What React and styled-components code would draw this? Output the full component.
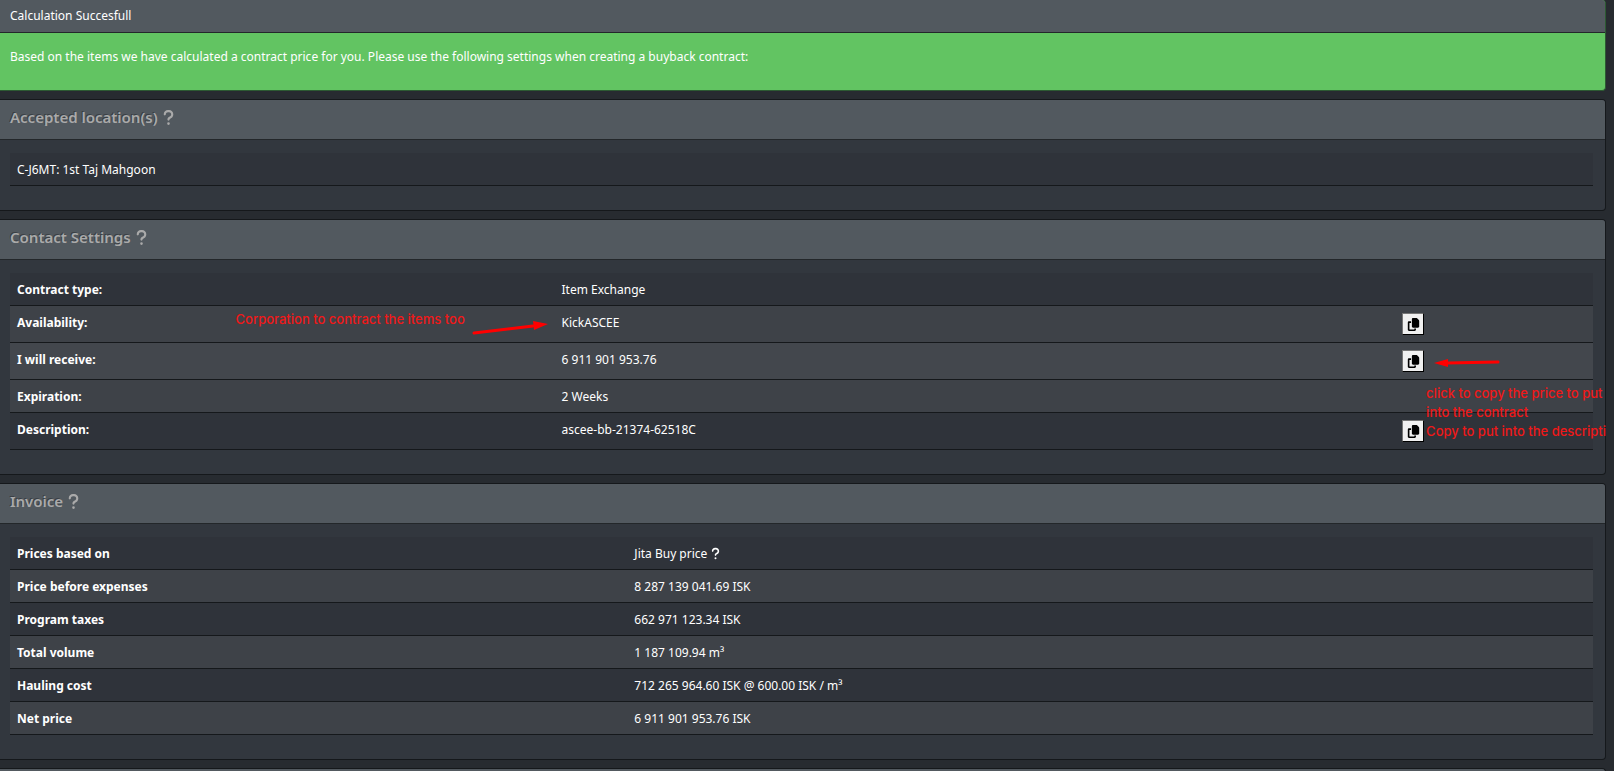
import React from 'react';
import styled, { createGlobalStyle, css } from 'styled-components';
import { FaCopy, FaQuestion } from 'react-icons/fa6';

const GlobalStyle = createGlobalStyle`
  *, *::before, *::after {
    box-sizing: border-box;
  }
  body {
    margin: 0;
    background: #272b30;
    color: #fff;
    font-family: 'Noto Sans', 'Open Sans', sans-serif;
    font-size: 12px;
    line-height: 20px;
  }
`;

const Page = styled.main`
  display: flex;
  flex-direction: column;
  gap: 8px;
  height: 100vh;
  padding-right: 8px;
  overflow: hidden;
`;

const Card = styled.section`
  flex-shrink: 0;
  background: ${(props) => (props.$success ? '#62c462' : '#32373e')};
  border: 1px solid ${(props) => (props.$success ? '#2c5a32' : '#15181b')};
  border-left: 0;
  border-radius: 0 4px 4px 0;
  ${(props) =>
    props.$success &&
    css`
      border-top: 0;
    `}
`;

const CardHeader = styled.header`
  display: flex;
  align-items: center;
  height: ${(props) => (props.$small ? 33 : 40)}px;
  padding: 0 10px 5px;
  background: #52595f;
  border-bottom: 1px solid #23272a;
  border-radius: 0 3px 0 0;
  ${(props) =>
    props.$small &&
    css`
      padding-bottom: 0;
    `}
`;

const Title = styled.h4`
  display: flex;
  align-items: center;
  gap: 2px;
  margin: 0;
  color: #aaa;
  font-size: 15px;
  font-weight: 600;
  text-shadow: -1px -1px 0 rgba(0, 0, 0, 0.3);
  svg {
    font-size: 17px;
  }
`;

const Message = styled.p`
  margin: 0;
  padding: 14px 10px 23px;
`;

const CardBody = styled.div`
  padding: 13px 12px 24px 10px;
`;

const Table = styled.table`
  width: 100%;
  table-layout: fixed;
  border-collapse: separate;
  border-spacing: 0;
`;

const Row = styled.tr`
  height: ${(props) => (props.$tall ? 37 : 33)}px;
  background: #3e4248;
  &:nth-child(odd) {
    background: ${(props) => (props.$active ? '#43474d' : '#2f333a')};
  }
  th,
  td {
    padding: 7px 7px 5px;
    border-bottom: 1px solid #15181b;
    text-align: left;
    vertical-align: top;
  }
`;

const Col = styled.col`
  width: ${(props) => props.$width};
`;

const Anchor = styled.div`
  position: relative;
  height: 22px;
`;

const CopyButton = styled.button`
  display: flex;
  align-items: center;
  justify-content: center;
  width: 22px;
  height: 22px;
  padding: 0;
  border: 1px solid;
  border-color: #767676 #000 #000 #767676;
  background: #f0f0f0;
  color: #000;
  font-size: 13px;
`;

const Note = styled.div`
  position: absolute;
  top: ${(props) => props.$top}px;
  left: ${(props) => props.$left}px;
  color: #f01818;
  font-family: 'Inter', sans-serif;
  font-size: 13px;
  font-weight: 500;
  line-height: 19px;
  white-space: nowrap;
`;

const Arrow = styled.svg`
  position: absolute;
  top: ${(props) => props.$top}px;
  left: ${(props) => props.$left}px;
  fill: #f00;
  stroke: #f00;
`;

const Hint = styled(FaQuestion)`
  margin-left: 2px;
  font-size: 13px;
  vertical-align: -2px;
`;

const settings = [
  { label: 'Contract type:', value: 'Item Exchange' },
  { label: 'Availability:', value: 'KickASCEE', copy: true },
  { label: 'I will receive:', value: '6 911 901 953.76', copy: true },
  { label: 'Expiration:', value: '2 Weeks' },
  { label: 'Description:', value: 'ascee-bb-21374-62518C', copy: true },
];

const invoice = [
  { label: 'Prices based on', value: 'Jita Buy price', hint: true },
  { label: 'Price before expenses', value: '8 287 139 041.69 ISK' },
  { label: 'Program taxes', value: '662 971 123.34 ISK' },
  { label: 'Total volume', value: '1 187 109.94 m³' },
  { label: 'Hauling cost', value: '712 265 964.60 ISK @ 600.00 ISK / m³' },
  { label: 'Net price', value: '6 911 901 953.76 ISK' },
];

function HelpTitle({ children }) {
  return (
    <CardHeader>
      <Title>
        {children} <FaQuestion />
      </Title>
    </CardHeader>
  );
}

function CorporationNote() {
  return (
    <Anchor as='span'>
      <Note as='span' $top={-4} $left={-326}>
        Corporation to contract the items too
      </Note>
      <Arrow width='80' height='18' $top={5} $left={-91}>
        <path d='M3 14 L62 7' strokeWidth='3' strokeLinecap='round' />
        <path d='M62 2 L77 5 L63 11 Z' strokeWidth='0' />
      </Arrow>
    </Anchor>
  );
}

function PriceNote() {
  return (
    <>
      <Arrow width='70' height='12' $top={7} $left={31}>
        <path d='M14 6 L65 5' strokeWidth='3' strokeLinecap='round' />
        <path d='M1 6 L15 2 L15 10 Z' strokeWidth='0' />
      </Arrow>
      <Note $top={34} $left={24}>
        click to copy the price to put
        <br />
        into the contract
        <br />
        Copy to put into the descripti
      </Note>
    </>
  );
}

export default function App() {
  return (
    <>
      <GlobalStyle />
      <Page>
        <Card $success>
          <CardHeader $small>Calculation Succesfull</CardHeader>
          <Message>
            Based on the items we have calculated a contract price for you.
            Please use the following settings when creating a buyback contract:
          </Message>
        </Card>

        <Card>
          <HelpTitle>Accepted location(s)</HelpTitle>
          <CardBody>
            <Table>
              <tbody>
                <Row>
                  <td>C-J6MT: 1st Taj Mahgoon</td>
                </Row>
              </tbody>
            </Table>
          </CardBody>
        </Card>

        <Card>
          <HelpTitle>Contact Settings</HelpTitle>
          <CardBody>
            <Table>
              <colgroup>
                <Col $width='34.4%' />
                <Col $width='53.1%' />
                <Col />
              </colgroup>
              <tbody>
                {settings.map((item, i) => (
                  <Row key={item.label} $tall={item.copy} $active={i === 2}>
                    <th scope='row'>{item.label}</th>
                    <td>
                      {i === 1 && <CorporationNote />}
                      {item.value}
                    </td>
                    <td>
                      {item.copy && (
                        <Anchor>
                          <CopyButton
                            type='button'
                            aria-label={`Copy ${item.value}`}
                          >
                            <FaCopy />
                          </CopyButton>
                          {i === 2 && <PriceNote />}
                        </Anchor>
                      )}
                    </td>
                  </Row>
                ))}
              </tbody>
            </Table>
          </CardBody>
        </Card>

        <Card>
          <HelpTitle>Invoice</HelpTitle>
          <CardBody>
            <Table>
              <colgroup>
                <Col $width='39%' />
                <Col />
              </colgroup>
              <tbody>
                {invoice.map((item) => (
                  <Row key={item.label}>
                    <th scope='row'>{item.label}</th>
                    <td>
                      {item.value}
                      {item.hint && <Hint />}
                    </td>
                  </Row>
                ))}
              </tbody>
            </Table>
          </CardBody>
        </Card>

        <Card>
          <CardHeader />
        </Card>
      </Page>
    </>
  );
}
